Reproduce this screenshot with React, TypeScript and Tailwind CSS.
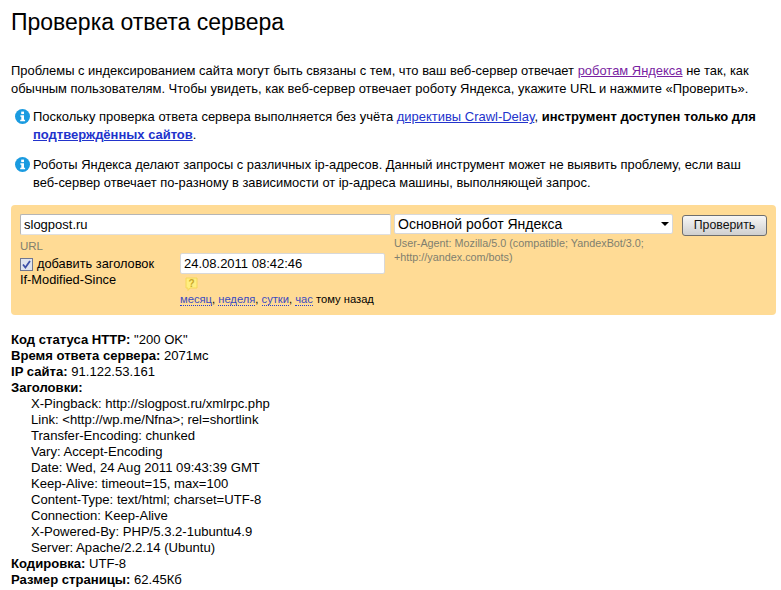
const headers = [
  "X-Pingback: http://slogpost.ru/xmlrpc.php",
  "Link: <http://wp.me/Nfna>; rel=shortlink",
  "Transfer-Encoding: chunked",
  "Vary: Accept-Encoding",
  "Date: Wed, 24 Aug 2011 09:43:39 GMT",
  "Keep-Alive: timeout=15, max=100",
  "Content-Type: text/html; charset=UTF-8",
  "Connection: Keep-Alive",
  "X-Powered-By: PHP/5.3.2-1ubuntu4.9",
  "Server: Apache/2.2.14 (Ubuntu)",
];

function InfoIcon() {
  return (
    <svg className="mt-[1px] h-[15px] w-[15px] shrink-0" viewBox="0 0 15 15">
      <circle cx="7.5" cy="7.5" r="7.5" fill="#1a9be0" />
      <rect x="6.2" y="2.6" width="2.8" height="2.5" fill="#fff" />
      <path d="M5.4 6.2h3.6v4.6h1.1v1.5H5.2v-1.5h1.1V7.7H5.4z" fill="#fff" />
    </svg>
  );
}

function DotLink({ children }: { children: string }) {
  return <span className="border-b border-dotted border-[#2b3fd0] text-[#3b4bc0]">{children}</span>;
}

export default function App() {
  return (
    <div className="h-[590px] overflow-hidden bg-white pl-[11px] pr-[5px] font-['Liberation_Sans',Arial,sans-serif] text-[12.9px] leading-[18px] text-black">
      <h1 className="pt-[7px] text-[23px] leading-[30px]">Проверка ответа сервера</h1>

      <p className="mt-[25px] text-[12.94px]">
        Проблемы с индексированием сайта могут быть связаны с тем, что ваш веб-сервер отвечает{" "}
        <a className="text-[#7a1fa2] underline">роботам Яндекса</a> не так, как
        <br />
        обычным пользователям. Чтобы увидеть, как веб-сервер отвечает роботу Яндекса, укажите URL и нажмите «Проверить».
      </p>

      <div className="mt-[10px] flex gap-[3px] pl-[4px]">
        <InfoIcon />
        <p className="text-[12.97px]">
          Поскольку проверка ответа сервера выполняется без учёта{" "}
          <a className="text-[#2233cc] underline">директивы Crawl-Delay</a>,{" "}
          <b>инструмент доступен только для</b>
          <br />
          <a className="font-bold text-[#2233cc] underline">подтверждённых сайтов</a>.
        </p>
      </div>

      <div className="mt-[12px] flex gap-[3px] pl-[4px]">
        <InfoIcon />
        <p>
          Роботы Яндекса делают запросы с различных ip-адресов. Данный инструмент может не выявить проблему, если ваш
          <br />
          веб-сервер отвечает по-разному в зависимости от ip-адреса машины, выполняющей запрос.
        </p>
      </div>

      <div className="mt-[13px] flex h-[110px] rounded-[4px] bg-[#ffdb95] pl-[9px] pt-[9px]">
        <div className="w-[374px] shrink-0">
          <div className="flex h-[21px] w-[371px] items-center rounded-[2px] border border-[#b5b5b5] border-b-[#e0e0e0] border-r-[#e0e0e0] bg-white pl-[3px] text-[13px]">
            slogpost.ru
          </div>
          <div className="mt-[4px] text-[11.5px] leading-[14px] text-[#807f6f]">URL</div>
          <div className="flex">
            <div className="w-[160px] shrink-0 pt-[3px] text-[12.8px] leading-[16px]">
              <div className="flex items-center gap-[4px]">
                <span className="flex h-[13px] w-[13px] items-center justify-center border border-[#6f7690] bg-[#dfe3ee]">
                  <svg className="h-[9px] w-[9px]" viewBox="0 0 9 9">
                    <path d="M1 4.5l2.4 3L8 1" fill="none" stroke="#3d4fa8" strokeWidth="1.8" />
                  </svg>
                </span>
                добавить заголовок
              </div>
              <div>If-Modified-Since</div>
            </div>
            <div>
              <div className="flex h-[21px] w-[205px] items-center rounded-[2px] border border-[#d8d8d8] bg-white pl-[3px] text-[13px]">
                24.08.2011 08:42:46
              </div>
              <svg className="ml-[5px] mt-[3px] h-[14px] w-[13px]" viewBox="0 0 13 14">
                <path d="M1 1h11v10H5l-2 2.5V11H1z" fill="#ffee80" stroke="#f5d65a" />
                <text x="6.5" y="9.5" fontSize="10" fontWeight="bold" textAnchor="middle" fill="#c9a82a">?</text>
              </svg>
              <div className="mt-[1px] text-[11.2px] leading-[14px]">
                <DotLink>месяц</DotLink>, <DotLink>неделя</DotLink>, <DotLink>сутки</DotLink>, <DotLink>час</DotLink>{" "}
                тому назад
              </div>
            </div>
          </div>
        </div>

        <div className="w-[279px] shrink-0">
          <div className="flex h-[20px] items-center justify-between rounded-[2px] border border-[#d8d8d8] bg-white pl-[3px] pr-[3px] text-[14px]">
            Основной робот Яндекса
            <span className="h-0 w-0 border-x-[4px] border-t-[4px] border-x-transparent border-t-black" />
          </div>
          <div className="mt-[2px] text-[10.8px] leading-[14px] text-[#807f6f]">
            User-Agent: Mozilla/5.0 (compatible; YandexBot/3.0;
            <br />
            +http://yandex.com/bots)
          </div>
        </div>

        <button className="ml-[9px] mt-[1px] h-[21px] w-[85px] rounded-[3px] border border-[#6e6e6e] bg-gradient-to-b from-[#f7f7f7] to-[#cfcfcf] text-[12.3px] leading-none text-[#111]">
          Проверить
        </button>
      </div>

      <div className="mt-[17px] text-[13.1px] leading-[16px]">
        <div>
          <b>Код статуса HTTP:</b> "200 OK"
        </div>
        <div>
          <b>Время ответа сервера:</b> 2071мс
        </div>
        <div>
          <b>IP сайта:</b> 91.122.53.161
        </div>
        <div>
          <b>Заголовки:</b>
        </div>
        <div className="pl-[20px]">
          {headers.map((h) => (
            <div key={h}>{h}</div>
          ))}
        </div>
        <div>
          <b>Кодировка:</b> UTF-8
        </div>
        <div>
          <b>Размер страницы:</b> 62.45Кб
        </div>
      </div>
    </div>
  );
}
